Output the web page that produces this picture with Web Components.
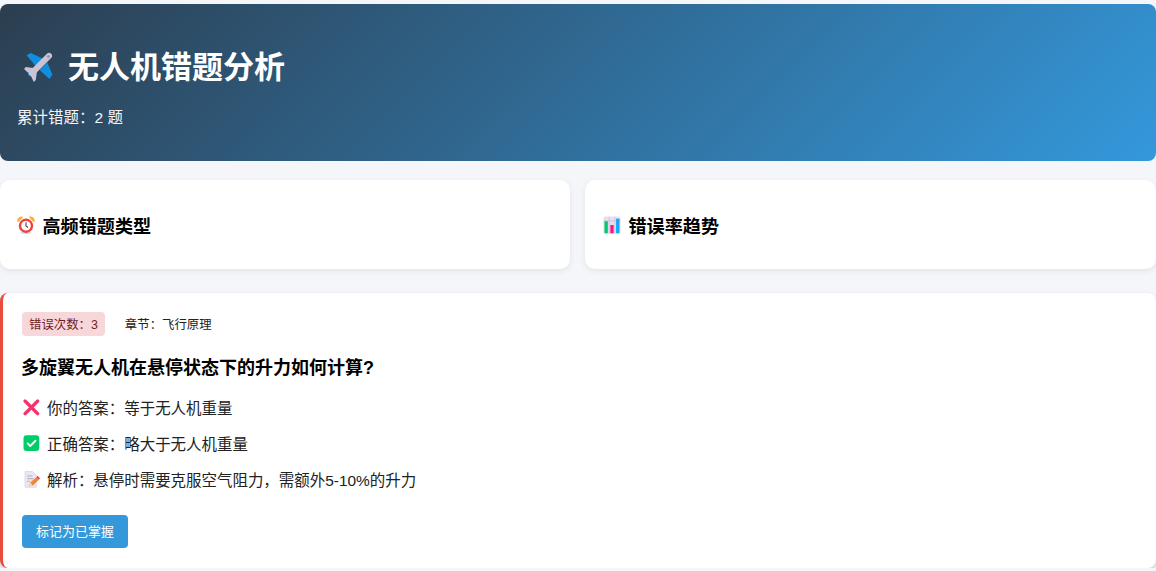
<!DOCTYPE html>
<html lang="zh">
<head>
<meta charset="utf-8">
<title>无人机错题分析</title>
<style>
  html, body { margin: 0; padding: 0; }
  body {
    background: #f5f6fa;
    font-family: "Liberation Sans", "Noto Sans CJK SC", sans-serif;
    color: #000;
    padding-top: 4px;
    overflow: hidden;
  }
  .stats {
    display: grid;
    grid-template-columns: 570px 571px;
    gap: 15px;
    margin: 19px 0 24px;
  }
</style>
</head>
<body>
  <page-header>
    <emoji-icon slot="icon" name="plane" size="33" style="margin-bottom: 4px"></emoji-icon>
    <span slot="title">无人机错题分析</span>
    累计错题&#xFF1A;2 题
  </page-header>

  <div class="stats">
    <stat-card icon="clock">高频错题类型</stat-card>
    <stat-card icon="chart" style="padding-left: 18px">错误率趋势</stat-card>
  </div>

  <mistake-card count="3" chapter="飞行原理" question="多旋翼无人机在悬停状态下的升力如何计算?">
    <answer-row icon="cross">你的答案&#xFF1A;等于无人机重量</answer-row>
    <answer-row icon="check">正确答案&#xFF1A;略大于无人机重量</answer-row>
    <answer-row icon="memo">解析&#xFF1A;悬停时需要克服空气阻力&#xFF0C;需额外5-10%的升力</answer-row>
  </mistake-card>

<script>
  const ICONS = {
    plane: `
      <path d="M4.5 5 8.5 3 20.5 8.5 13.5 16Z" fill="#0f8fe0"/>
      <path d="M29.5 24 26.5 28 17 19.5 24.5 12Z" fill="#0f8fe0"/>
      <path d="M2 18.4 3.6 16.6 11 17.5 14.4 21 13.4 29 11.4 31 8.4 24.4Z" fill="#c9c3d6"/>
      <path d="M6.4 21.6 9.6 24.6 7.6 25.6 5.6 23.6Z" fill="#0f8fe0"/>
      <path d="M9.5 22.5 26.2 5.8" stroke="#c9c3d6" stroke-width="5.8" stroke-linecap="round"/>
      <circle cx="25.6" cy="6.4" r="1.2" fill="#8c86a3"/>
    `,
    clock: `
      <path d="M1 7C1 3 4 1 7 1.5L2 7Z" fill="#fbb03b" stroke="#fbb03b" stroke-width="1.6" stroke-linejoin="round"/>
      <path d="M23 7C23 3 20 1 17 1.5L22 7Z" fill="#fbb03b" stroke="#fbb03b" stroke-width="1.6" stroke-linejoin="round"/>
      <ellipse cx="12" cy="22" rx="7" ry="1.8" fill="#d5d5d5"/>
      <circle cx="12" cy="13" r="8" fill="#fff" stroke="#f0413c" stroke-width="3.2"/>
      <path d="M12 8.2V13.4L14.8 15.4" fill="none" stroke="#5a4a4a" stroke-width="1.5"/>
    `,
    chart: `
      <rect x="0.5" y="0.5" width="23" height="23" rx="3" fill="#e7dff0"/>
      <path d="M8.3 1V23M15.7 1V23M1 6.5H23" stroke="#c9bdd6" stroke-width="1"/>
      <rect x="2" y="7" width="4.4" height="16" fill="#00c86e"/>
      <rect x="9.8" y="12" width="4.4" height="11" fill="#f5197f"/>
      <rect x="17.4" y="3.6" width="4.6" height="19.4" fill="#16aaf5"/>
    `,
    cross: `<path d="M4.2 4.2 20.8 20.8M20.8 4.2 4.2 20.8" stroke="#f5326b" stroke-width="4.6" stroke-linecap="round"/>`,
    check: `
      <rect x="2" y="1.5" width="21" height="21" rx="4" fill="#00cc6a"/>
      <path d="M7.5 12.5 11 16 18 9" fill="none" stroke="#fff" stroke-width="2.4" stroke-linecap="round" stroke-linejoin="round"/>
    `,
    memo: `
      <path d="M4 2H14L19 7V23H4Z" fill="#ebe6f2" stroke="#d8d0e2" stroke-width="1"/>
      <path d="M7 8H14M7 11.5H15M7 15H10" stroke="#a99fb8" stroke-width="1.2"/>
      <path d="M9 22 11 16.5 19 9.5 22.5 13 14.5 20.5Z" fill="#f4862b"/>
      <path d="M19 9.5 21 7.8 24 11.2 22.5 13Z" fill="#f5326b"/>
      <path d="M9 22 11 16.5 14.5 20.5Z" fill="#f7d9a8"/>
    `
  };

  class EmojiIcon extends HTMLElement {
    static get observedAttributes() { return ['name', 'size']; }

    constructor() {
      super();
      this.attachShadow({ mode: 'open' });
    }

    connectedCallback() { this.render(); }
    attributeChangedCallback() { this.render(); }

    render() {
      const name = this.getAttribute('name');
      const size = this.getAttribute('size') || 18;
      const box = name === 'plane' ? 32 : 24;
      this.shadowRoot.innerHTML = `
        <style>
          :host { display: inline-flex; flex: none; width: ${size}px; height: ${size}px; }
          svg { width: 100%; height: 100%; display: block; }
        </style>
        <svg viewBox="0 0 ${box} ${box}" aria-hidden="true">${ICONS[name] || ''}</svg>
      `;
    }
  }
  customElements.define('emoji-icon', EmojiIcon);

  const headerTemplate = document.createElement('template');
  headerTemplate.innerHTML = `
    <style>
      :host {
        display: block;
        height: 157px;
        box-sizing: border-box;
        padding: 46px 17px 0;
        background: linear-gradient(135deg, #2c3e50, #3498db);
        border-radius: 8px;
        color: #fff;
      }
      h1 {
        display: flex;
        align-items: center;
        gap: 13px;
        margin: 0 0 20px 5px;
        height: 36px;
        font-size: 31px;
        line-height: 36px;
        font-weight: 700;
      }
      p { margin: 0; font-size: 15.5px; line-height: 24px; opacity: .95; }
    </style>
    <h1><slot name="icon"></slot><slot name="title"></slot></h1>
    <p><slot></slot></p>
  `;
  class PageHeader extends HTMLElement {
    constructor() {
      super();
      this.attachShadow({ mode: 'open' });
      this.shadowRoot.appendChild(headerTemplate.content.cloneNode(true));
    }
  }
  customElements.define('page-header', PageHeader);

  const statTemplate = document.createElement('template');
  statTemplate.innerHTML = `
    <style>
      :host {
        display: flex;
        align-items: center;
        gap: 7.5px;
        height: 89px;
        box-sizing: border-box;
        padding: 0 18px 0 17px;
        background: #fff;
        border-radius: 10px;
        box-shadow: 0 2px 6px rgba(0, 0, 0, .08);
        font-size: 18.1px;
        font-weight: 700;
      }
    </style>
    <emoji-icon></emoji-icon>
    <slot></slot>
  `;
  class StatCard extends HTMLElement {
    constructor() {
      super();
      this.attachShadow({ mode: 'open' });
      this.shadowRoot.appendChild(statTemplate.content.cloneNode(true));
      this.shadowRoot.querySelector('emoji-icon').setAttribute('name', this.getAttribute('icon'));
    }
  }
  customElements.define('stat-card', StatCard);

  const rowTemplate = document.createElement('template');
  rowTemplate.innerHTML = `
    <style>
      :host {
        display: flex;
        align-items: center;
        gap: 7px;
        height: 24px;
        margin-bottom: 12px;
        font-size: 15.46px;
        color: #222;
      }
    </style>
    <emoji-icon></emoji-icon>
    <slot></slot>
  `;
  class AnswerRow extends HTMLElement {
    constructor() {
      super();
      this.attachShadow({ mode: 'open' });
      this.shadowRoot.appendChild(rowTemplate.content.cloneNode(true));
      this.shadowRoot.querySelector('emoji-icon').setAttribute('name', this.getAttribute('icon'));
    }
  }
  customElements.define('answer-row', AnswerRow);

  const mistakeTemplate = document.createElement('template');
  mistakeTemplate.innerHTML = `
    <style>
      :host {
        display: block;
        height: 275px;
        box-sizing: border-box;
        padding: 19px 19px 0;
        background: #fff;
        border-left: 3px solid #e74c3c;
        border-radius: 8px;
        box-shadow: 0 2px 4px rgba(0, 0, 0, .2);
      }
      .meta {
        display: flex;
        align-items: center;
        gap: 20px;
        font-size: 12.4px;
        color: #222;
      }
      .count {
        display: flex;
        align-items: center;
        padding: 0 7px;
        height: 24px;
        background: #f8d7da;
        color: #721c24;
        border-radius: 4px;
      }
      h3 {
        margin: 19px 0 14px -1px;
        font-size: 18px;
        line-height: 26px;
        font-weight: 700;
      }
      button {
        display: block;
        margin-top: 24px;
        width: 106px;
        height: 33px;
        padding: 0 0 2px;
        border: 0;
        border-radius: 4px;
        background: #3498db;
        color: #fff;
        font: inherit;
        font-size: 13px;
      }
    </style>
    <div class="meta"><span class="count"></span><span class="chapter"></span></div>
    <h3></h3>
    <slot></slot>
    <button>标记为已掌握</button>
  `;
  class MistakeCard extends HTMLElement {
    constructor() {
      super();
      this.attachShadow({ mode: 'open' });
      this.shadowRoot.appendChild(mistakeTemplate.content.cloneNode(true));
      this.shadowRoot.querySelector('.count').textContent = '错误次数\uFF1A' + this.getAttribute('count');
      this.shadowRoot.querySelector('.chapter').textContent = '章节\uFF1A' + this.getAttribute('chapter');
      this.shadowRoot.querySelector('h3').textContent = this.getAttribute('question');
    }
  }
  customElements.define('mistake-card', MistakeCard);
</script>
</body>
</html>
